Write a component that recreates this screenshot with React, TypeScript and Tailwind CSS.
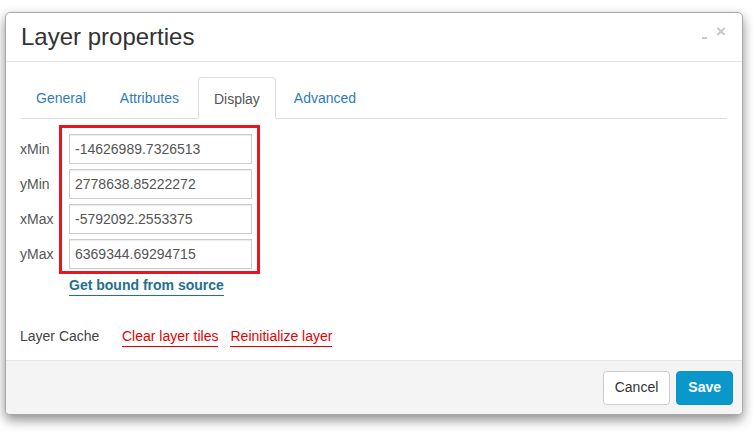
export default function App() {
  const rows = [
    { label: "xMin", value: "-14626989.7326513" },
    { label: "yMin", value: "2778638.85222272" },
    { label: "xMax", value: "-5792092.2553375" },
    { label: "yMax", value: "6369344.69294715" },
  ];

  return (
    <div className="min-h-screen bg-white pt-[12px] pl-[5px] font-['Liberation_Sans',Arial,sans-serif] text-[#333]">
      <div className="w-[738px] rounded-[5px] border border-[#a8a8a8] bg-white shadow-[0_5px_12px_rgba(0,0,0,0.45)] overflow-hidden">
        {/* Header */}
        <div className="relative h-[49px] border-b border-[#e5e5e5] pl-[15px]">
          <h4 className="pt-[10px] text-[24px] leading-[28px] font-normal text-[#333]">Layer properties</h4>
          <div className="absolute right-[16px] top-[10px] flex items-start gap-[9px] text-[#c8c8c8] font-bold">
            <span className="mt-[14px] block h-[2px] w-[5px] bg-[#c8c8c8]"></span>
            <span className="text-[17px] leading-[17px]">×</span>
          </div>
        </div>

        {/* Body */}
        <div className="h-[298px] px-[15px] pt-[15px]">
          <ul className="flex border-b border-[#ddd] text-[14px] leading-[20px]">
            <li className="mr-[2px]">
              <a className="block px-[15px] pt-[11px] pb-[9px] text-[#337ab7]">General</a>
            </li>
            <li className="mr-[2px]">
              <a className="block px-[17px] pt-[11px] pb-[9px] text-[#337ab7]">Attributes</a>
            </li>
            <li className="mr-[2px] -mb-px">
              <a className="block rounded-t-[4px] border border-[#ddd] border-b-white bg-white px-[15px] pt-[11px] pb-[9px] text-[#555]">
                Display
              </a>
            </li>
            <li>
              <a className="block px-[16px] pt-[11px] pb-[9px] text-[#337ab7]">Advanced</a>
            </li>
          </ul>

          <div className="relative mt-[15px]">
            <div className="flex flex-col gap-[5px]">
              {rows.map((r) => (
                <div key={r.label} className="flex items-center text-[14px]">
                  <label className="w-[49px] -ml-[1px] text-[#555]">{r.label}</label>
                  <input
                    readOnly
                    value={r.value}
                    className="h-[30px] w-[183px] border border-[#ccc] px-[5px] text-[14px] text-[#555] shadow-[inset_0_1px_1px_rgba(0,0,0,0.075)] outline-none font-['Liberation_Sans',Arial,sans-serif]"
                  />
                </div>
              ))}
            </div>
            {/* annotation box */}
            <div className="pointer-events-none absolute left-[38px] top-[-9px] h-[149px] w-[201px] border-[3px] border-[#e8141e]"></div>

            <div className="mt-[4px] pl-[48px]">
              <a className="inline-block border-b border-[#23708f] pb-[1px] text-[14px] font-bold leading-[17px] text-[#23708f]">
                Get bound from source
              </a>
            </div>
          </div>

          <div className="mt-[31px] flex items-start text-[14px] leading-[17px]">
            <span className="-ml-[1px] w-[102px] text-[#444]">Layer Cache</span>
            <a className="border-b border-[#e60000] pb-[1px] text-[#e60000]">Clear layer tiles</a>
            <a className="ml-[12px] border-b border-[#e60000] pb-[1px] text-[#e60000]">Reinitialize layer</a>
          </div>
        </div>

        {/* Footer */}
        <div className="flex h-[54px] items-center justify-end gap-[6px] border-t border-[#e5e5e5] bg-[#f4f4f4] pr-[9px]">
          <button className="h-[34px] rounded-[4px] border border-[#ccc] bg-white px-[11px] text-[14px] text-[#333]">
            Cancel
          </button>
          <button className="h-[34px] rounded-[4px] border border-[#0a94c4] bg-[#0a97c9] px-[11px] text-[14px] font-bold text-white">
            Save
          </button>
        </div>
      </div>
    </div>
  );
}
